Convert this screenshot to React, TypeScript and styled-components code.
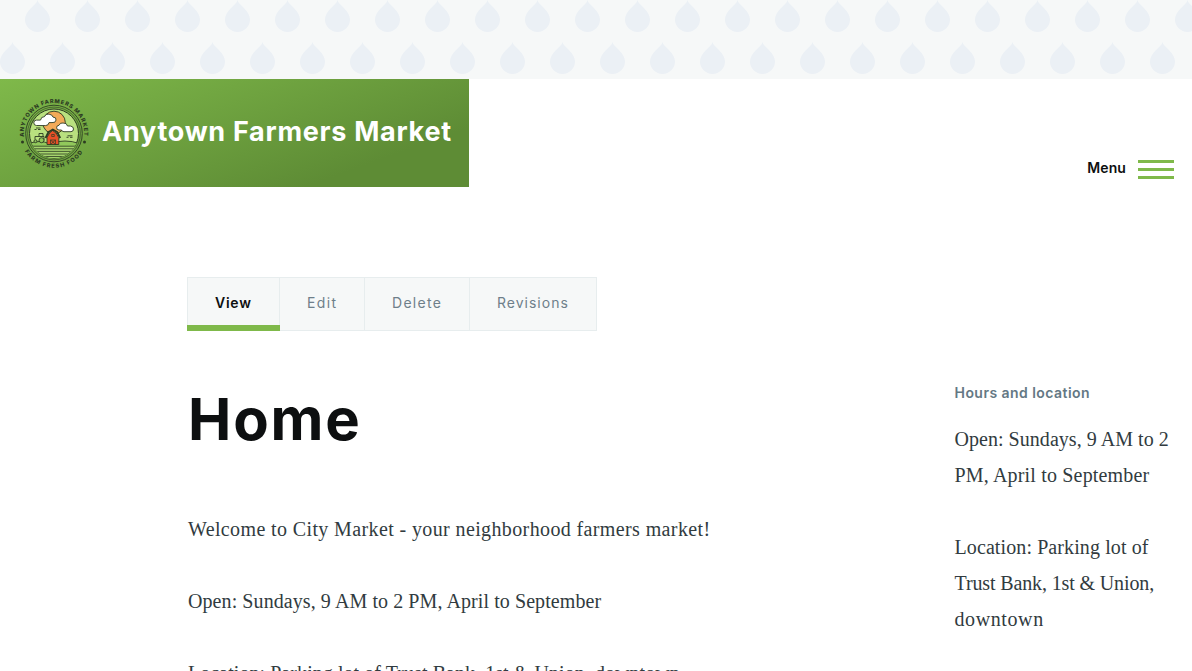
import React from "react";
import styled, { createGlobalStyle } from "styled-components";

const sans = `Inter, "Liberation Sans", sans-serif`;
const serif = `"Liberation Serif", serif`;

const GlobalStyle = createGlobalStyle`
  *, *::before, *::after { box-sizing: border-box; }
  body { margin: 0; height: 671px; overflow: hidden; background: #fff; color: #313637; }
`;

const Page = styled.div`
  width: 100%;
  height: 671px;
  overflow: hidden;
`;

const Banner = styled.svg`
  display: block;
  width: 100%;
  height: 79px;
`;

const Header = styled.header`
  display: flex;
  justify-content: space-between;
  align-items: flex-start;
  height: 198px;
`;

const Brand = styled.a`
  display: flex;
  align-items: center;
  width: 469px;
  height: 108px;
  padding-left: 18px;
  color: #fff;
  background: linear-gradient(160deg, #7fb94a 0%, #5e8c35 78.66%);
`;

const SiteName = styled.span`
  margin: -2px 0 0 12px;
  font: 700 27px/36px ${sans};
  letter-spacing: 0.72px;
  white-space: nowrap;
`;

const MenuButton = styled.button`
  display: flex;
  align-items: center;
  gap: 12px;
  margin: 78px 18px 0 0;
  padding: 0;
  border: 0;
  background: none;
  color: #0d0f10;
  font: 600 14px/22px ${sans};
  letter-spacing: 0.1px;
`;

const MenuBars = styled.span`
  width: 36px;
  height: 19px;
  margin-top: 2px;
  border: solid #7fb94a;
  border-width: 3px 0;
  display: flex;
  align-items: center;
  &::before { content: ""; width: 100%; height: 3px; background: #7fb94a; }
`;

const Tabs = styled.nav`
  display: flex;
  width: 410px;
  height: 54px;
  margin-left: 187px;
  border: 1px solid #e7edee;
  background: #f6f8f8;
`;

const Tab = styled.a<{ $width: number; $spacing: number; $active?: boolean }>`
  position: relative;
  flex: 0 0 ${(p) => p.$width}px;
  padding-left: 27px;
  color: ${(p) => (p.$active ? "#0d0f10" : "#6e7f8a")};
  font: ${(p) => (p.$active ? 600 : 400)} 14px/50px ${sans};
  letter-spacing: ${(p) => p.$spacing}px;
  border-right: 1px solid #e7edee;
  &:last-child { border-right: 0; }
  &::after {
    content: "";
    display: ${(p) => (p.$active ? "block" : "none")};
    position: absolute;
    left: -1px;
    right: -1px;
    bottom: -1px;
    height: 6px;
    background: #7fb94a;
  }
`;

const Columns = styled.div`
  display: flex;
  justify-content: space-between;
  padding: 0 17.5px 0 188px;
`;

const Article = styled.main`
  padding-top: 50px;
`;

const Title = styled.h1`
  margin: 0;
  font: 700 58px/76px ${sans};
  letter-spacing: 1.8px;
  color: #0d0f10;
`;

const Body = styled.div`
  padding-top: 54px;
`;

const Paragraph = styled.p`
  margin: 0 0 36px;
  font: 400 20px/36px ${serif};
  color: #313b40;
  white-space: nowrap;
`;

const Line = styled.span<{ $spacing: number }>`
  display: block;
  letter-spacing: ${(p) => p.$spacing}px;
`;

const Sidebar = styled.aside`
  width: 220px;
  padding-top: 52px;
`;

const SidebarTitle = styled.h2`
  margin: 0 0 18px;
  font: 600 14px/20px ${sans};
  letter-spacing: 0.45px;
  color: #647884;
`;

function DropBanner() {
  return (
    <Banner aria-hidden="true">
      <defs>
        <pattern id="drops" width="50" height="84" patternUnits="userSpaceOnUse">
          <path id="drop" d="M37.5 0C38 5 50 10 50 19.5a12.5 12.5 0 0 1-25 0C25 10 37 5 37.5 0Z" fill="#ebf0f5" />
          <use href="#drop" x="-25" y="42" />
        </pattern>
      </defs>
      <rect width="100%" height="79" fill="#f6f8f8" />
      <rect width="100%" height="79" fill="url(#drops)" />
    </Banner>
  );
}

const ink = "#2c3b22";

function Logo() {
  return (
    <svg width="72" height="72" viewBox="-36 -36.5 72 72" aria-label="Anytown Farmers Market">
      <defs>
        <path id="arcTop" d="M-29.9 4A30.2 30.2 0 1 1 29.9 4" />
        <path id="arcBottom" d="M-34.2 0A34.2 34.2 0 0 0 34.2 0" />
        <clipPath id="scene"><circle r="24.5" /></clipPath>
      </defs>
      <g fontFamily="Inter, sans-serif" fontWeight="800" fontSize="5.6" fill={ink} textAnchor="middle">
        <text letterSpacing="0.75"><textPath href="#arcTop" startOffset="50%">ANYTOWN FARMERS MARKET</textPath></text>
        <text letterSpacing="1.15"><textPath href="#arcBottom" startOffset="50%">FARM FRESH FOOD</textPath></text>
      </g>
      <circle cx="-31.5" cy="8.5" r="1.5" fill={ink} />
      <circle cx="30.5" cy="8.5" r="1.5" fill={ink} />
      <circle r="28.3" fill="none" stroke={ink} strokeWidth="0.9" />
      <circle r="26.4" fill="none" stroke={ink} strokeWidth="0.6" />
      <circle r="24.5" fill="#b9e07f" stroke={ink} strokeWidth="1" />
      <g clipPath="url(#scene)" stroke={ink} strokeWidth="0.9" strokeLinejoin="round">
        <circle cx="0" cy="-11" r="11.3" fill="#f3aa58" />
        <path d="M-25 10Q-14 6-5 10Q12 5 25 10V25H-25Z" fill="#91c85b" />
        <path d="M-25 13H25V25H-25Z" fill="#a5d36d" stroke="none" />
        <path d="M-25 12.7H25M-25 15.3H25M-25 17.9H25M-25 20.5H25M-25 23H25" strokeWidth="0.8" />
        <path d="M-16-8h-1.5a2.7 2.7 0 0 1 0-5.4h4q.5-3.5 4-3.5 1-3 4.5-2.5t4 3q3.5 0 3 3t-4 2.5h-3q-.5 3-3.5 3Z" fill="#fff" />
        <path d="M5-3.5a2.3 2.3 0 0 1 0-4.7Q6-11 9-10.5q4-.3 4.5 3h3q3 .5 3 3t-2.5 2.7H10q-2 0-2.5-1.7Z" fill="#fff" />
        <path d="M-7 11V4l2.5-4.5L-1.5-3 2-0.5 4.8 4V11Z" fill="#e75027" />
        <path d="M-8.5 4.5-5.5-1.5-1.2-4 3.2-1.5 6.2 4.5" fill="none" strokeWidth="1.8" />
        <path d="M-3.5 11V6.5h5V11M-3.5 6.5 1.5 11M1.5 6.5-3.5 11M-2.3 1h2.6v2h-2.6Z" fill="none" strokeWidth="0.7" />
        <path d="M-19 6v-3h4v-3h4v3h1v4M-15 3h4M-18-5.5h4.5M-19.5-4h2M-16-4h2.5M13.5 2.3h5M12.5 3.8h2M16 3.8h2.5" fill="none" />
        <circle cx="-18.5" cy="7.7" r="1.5" fill="#91c85b" />
        <circle cx="-12.5" cy="6.7" r="2.5" fill="#91c85b" />
      </g>
    </svg>
  );
}

export default function App() {
  return (
    <Page>
      <GlobalStyle />
      <DropBanner />
      <Header>
        <Brand>
          <Logo />
          <SiteName>Anytown Farmers Market</SiteName>
        </Brand>
        <MenuButton>
          Menu
          <MenuBars />
        </MenuButton>
      </Header>
      <Tabs>
        <Tab $width={92} $spacing={0.75} $active>View</Tab>
        <Tab $width={85} $spacing={1.35}>Edit</Tab>
        <Tab $width={105} $spacing={1.3}>Delete</Tab>
        <Tab $width={126} $spacing={1}>Revisions</Tab>
      </Tabs>
      <Columns>
        <Article>
          <Title>Home</Title>
          <Body>
            <Paragraph><Line $spacing={0.38}>Welcome to City Market - your neighborhood farmers market!</Line></Paragraph>
            <Paragraph><Line $spacing={0.08}>Open: Sundays, 9 AM to 2 PM, April to September</Line></Paragraph>
            <Paragraph><Line $spacing={0.06}>Location: Parking lot of Trust Bank, 1st &amp; Union, downtown</Line></Paragraph>
          </Body>
        </Article>
        <Sidebar>
          <SidebarTitle>Hours and location</SidebarTitle>
          <Paragraph>
            <Line $spacing={0.04}>Open: Sundays, 9 AM to 2</Line>
            <Line $spacing={0.17}>PM, April to September</Line>
          </Paragraph>
          <Paragraph>
            <Line $spacing={0.1}>Location: Parking lot of</Line>
            <Line $spacing={-0.13}>Trust Bank, 1st &amp; Union,</Line>
            <Line $spacing={0.6}>downtown</Line>
          </Paragraph>
        </Sidebar>
      </Columns>
    </Page>
  );
}
